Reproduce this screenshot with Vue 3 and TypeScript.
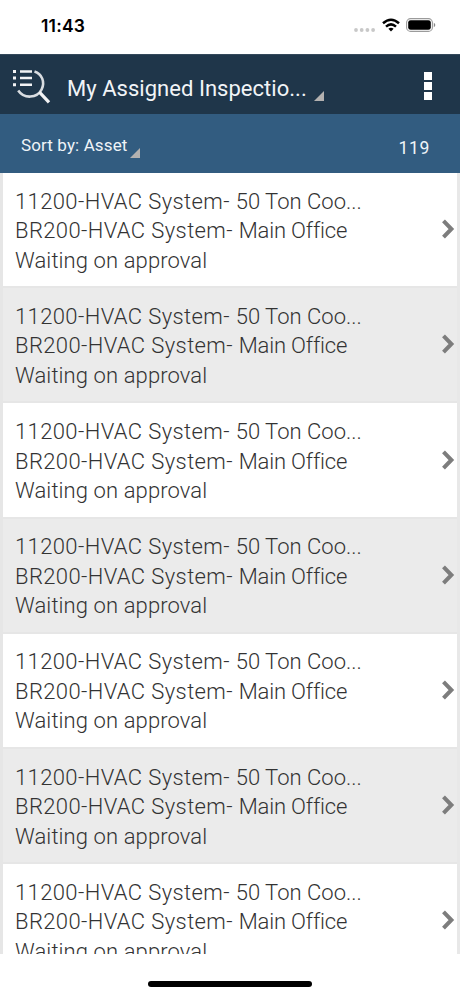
<script setup lang="ts">
interface Inspection {
  id: number
  assetCode: string
  assetName: string
  locationCode: string
  locationName: string
  status: string
}

const inspections: Inspection[] = Array.from({ length: 7 }, (_, i) => ({
  id: i,
  assetCode: '11200-HVAC System-',
  assetName: '50 Ton Coo...',
  locationCode: 'BR200-HVAC System-',
  locationName: 'Main Office',
  status: 'Waiting on approval',
}))
</script>

<template>
  <div class="screen">
    <div class="status-bar">
      <span class="time">11:43</span>
      <div class="indicators">
        <svg class="signal" width="22" height="4" viewBox="0 0 22 4" fill="#c8c8c8">
          <circle cx="2" cy="2" r="1.9" /><circle cx="7.7" cy="2" r="1.9" />
          <circle cx="13.4" cy="2" r="1.9" /><circle cx="19.1" cy="2" r="1.9" />
        </svg>
        <svg class="wifi" width="18" height="14" viewBox="0 0 18 14" fill="none" stroke="#000" stroke-width="2.5">
          <path d="M1 5.2Q9-1.8 17 5.2" />
          <path d="M4 8.6Q9 4.2 14 8.6" />
          <path d="M6.4 10.7Q9 8.7 11.6 10.7L9 13.4Z" fill="#000" stroke="none" />
        </svg>
        <svg class="battery" width="30" height="14" viewBox="0 0 30 14">
          <rect x=".6" y=".6" width="25.8" height="12.8" rx="4" fill="#fff" stroke="#9b9b9b" stroke-width="1.1" />
          <rect x="2.2" y="2.2" width="22.6" height="9.6" rx="2.4" />
          <path d="M27.8 4.8Q29.3 5.5 29.3 7T27.8 9.2Z" fill="#888" />
        </svg>
      </div>
    </div>

    <header class="app-bar">
      <svg class="search" width="40" height="38" viewBox="0 0 40 38" fill="none" stroke="#f2f3f5">
        <path d="M2 4.5H5M2 11H5M2 17.8H5" stroke-width="3" />
        <path d="M9 4.5H21M9 11H21M9 17.8H21" stroke-width="2.6" />
        <path d="M23.5 4.6C31 7 34.3 15 30.6 22.5C26 31.5 13 32 7.2 23.5" stroke="#d9dde1" stroke-width="2.6" />
        <path d="M28.4 25.2L38 35.4" stroke-width="3.2" />
      </svg>
      <h1 class="title">My Assigned Inspectio...</h1>
      <svg class="corner" width="10" height="10" viewBox="0 0 10 10"><path d="M10 0V10H0Z" /></svg>
      <svg class="more" width="8" height="28" viewBox="0 0 8 28" fill="#fff">
        <path d="M0 0H8V8H0ZM0 10H8V18H0ZM0 20H8V28H0Z" />
      </svg>
    </header>

    <div class="sort-bar">
      <span class="sort">Sort by: Asset</span>
      <svg class="corner" width="10" height="10" viewBox="0 0 10 10"><path d="M10 0V10H0Z" /></svg>
      <span class="count">119</span>
    </div>

    <main class="list">
      <article v-for="item in inspections" :key="item.id" class="row">
        <div class="details">
          <div>{{ item.assetCode }} <span class="asset-name">{{ item.assetName }}</span></div>
          <div>{{ item.locationCode }} <span class="location-name">{{ item.locationName }}</span></div>
          <div class="state">{{ item.status }}</div>
        </div>
        <svg class="chevron" width="13" height="20" viewBox="0 0 13 20" fill="none" stroke="#7d7d7d" stroke-width="4">
          <path d="M1.5 1.8L9.4 10L1.5 18.2" />
        </svg>
      </article>
    </main>

    <footer class="home"><div class="handle"></div></footer>
  </div>
</template>

<style>
body {
  background: #fff;
}
</style>

<style scoped>
.screen {
  width: 460px;
  height: 996px;
  display: flex;
  flex-direction: column;
  overflow: hidden;
  background: #fff;
  font-family: Roboto, "Liberation Sans", sans-serif;
}
.screen * {
  box-sizing: border-box;
}
.status-bar {
  height: 54px;
  flex: none;
  display: flex;
  justify-content: space-between;
  padding: 15px 24px 0 41px;
}
.time {
  font: 600 17.5px/21px Inter, sans-serif;
  letter-spacing: 0.2px;
  color: #000;
}
.indicators {
  display: flex;
  align-items: flex-start;
  padding-top: 3px;
}
.signal {
  margin: 10px 6px 0 0;
}
.wifi {
  margin-right: 6px;
}
.app-bar {
  height: 60px;
  flex: none;
  display: flex;
  align-items: flex-start;
  padding: 0 28px 0 11px;
  background: #1f364a;
  border-top: 1px solid #34495b;
}
.search {
  margin-top: 12px;
}
.title {
  width: 240px;
  margin: 19px 0 0 16px;
  font-size: 22px;
  line-height: 30px;
  font-weight: 400;
  letter-spacing: 0.03px;
  color: #f1f4f7;
  white-space: nowrap;
}
.corner {
  flex: none;
  fill: #b3b1b0;
}
.app-bar .corner {
  margin: 36px 0 0 7px;
}
.more {
  margin: 17px 0 0 auto;
}
.sort-bar {
  height: 59px;
  flex: none;
  display: flex;
  align-items: flex-start;
  padding: 0 30px 0 21px;
  background: #325c80;
  color: #eff4f8;
}
.sort {
  width: 106px;
  margin-top: 20px;
  font-size: 17px;
  line-height: 22px;
  letter-spacing: 0.12px;
  white-space: nowrap;
}
.sort-bar .corner {
  margin: 34px 0 0 3px;
}
.count {
  margin: 23px 0 0 auto;
  font-size: 17.5px;
  line-height: 22px;
  letter-spacing: 0.7px;
}
.list {
  height: 781px;
  flex: none;
  overflow: hidden;
  border-left: 3px solid #e6e6e6;
  border-right: 3px solid #e8e8e8;
}
.row {
  height: 115.2px;
  display: flex;
  justify-content: space-between;
  padding: 13.7px 2px 0 12px;
  border-bottom: 2px solid #e6e6e6;
  color: #333;
}
.row:nth-child(even) {
  background: #ebebeb;
}
.details {
  font-size: 22px;
  font-weight: 300;
  line-height: 29.5px;
  letter-spacing: 0.39px;
  white-space: nowrap;
}
.asset-name {
  letter-spacing: 0.02px;
}
.location-name {
  letter-spacing: -0.18px;
}
.state {
  letter-spacing: 0.1px;
}
.chevron {
  margin-top: 32.5px;
}
.home {
  flex: 1;
  display: flex;
  justify-content: center;
  padding-top: 27px;
}
.handle {
  width: 164px;
  height: 6px;
  border-radius: 3px;
  background: #000;
}
</style>
